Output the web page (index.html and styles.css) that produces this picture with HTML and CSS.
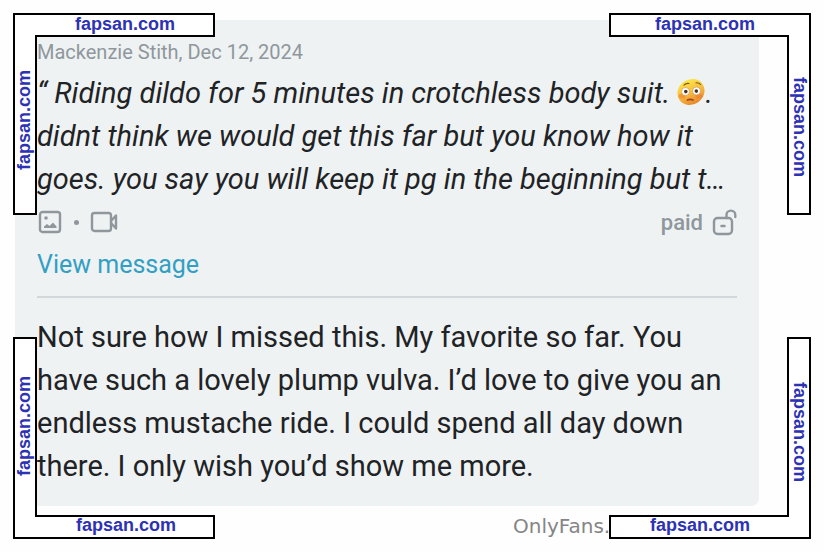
FILE: index.html
```html
<!DOCTYPE html>
<html lang="en">
<head>
    <meta charset="UTF-8">
    <meta name="viewport" content="width=device-width, initial-scale=1.0">
    <title>Message</title>
    <link rel="stylesheet" href="styles.css">
</head>
<body>
    <main class="message">
        <section class="quote">
            <div class="meta">Mackenzie Stith, Dec 12, 2024</div>
            <blockquote class="quote-text">
                “ Riding dildo for 5 minutes in crotchless body suit. <svg class="emoji" viewBox="0 0 28 28" role="img" aria-label="flushed face">
                    <defs>
                        <linearGradient id="face" x1="0.6" y1="0" x2="0.4" y2="1">
                            <stop offset="0" stop-color="#fbe84a"/>
                            <stop offset="0.5" stop-color="#f6bd3e"/>
                            <stop offset="1" stop-color="#e8872c"/>
                        </linearGradient>
                    </defs>
                    <ellipse cx="14" cy="14" rx="14" ry="12.5" transform="rotate(-35 14 14)" fill="url(#face)"/>
                    <ellipse cx="5" cy="18" rx="3.5" ry="2.5" fill="#ee7438" opacity="0.5"/>
                    <ellipse cx="22" cy="18" rx="3.5" ry="2.5" fill="#ee7438" opacity="0.5"/>
                    <circle cx="8.5" cy="13.5" r="4" fill="#fff" stroke="#c58a45" stroke-width="0.6"/>
                    <circle cx="19.5" cy="13" r="4" fill="#fff" stroke="#c58a45" stroke-width="0.6"/>
                    <circle cx="8.8" cy="13.6" r="1.8" fill="#4b3020"/>
                    <circle cx="19.3" cy="13.1" r="1.8" fill="#4b3020"/>
                    <path d="M7 7.2Q9 4.800 12 5.500M19 4.800Q22 4.500 23.500 6.500" fill="none" stroke="#85591d" stroke-width="1.2" stroke-linecap="round"/>
                    <path d="M10.500 22Q13 20.800 16 22" fill="none" stroke="#a4432a" stroke-width="1.8" stroke-linecap="round"/>
                </svg>.<br>
                didnt think we would get this far but you know how it<br>
                goes. you say you will keep it pg in the beginning but t…
            </blockquote>
            <div class="info">
                <div class="media">
                    <svg class="icon" viewBox="0 0 24 24">
                        <rect x="2" y="2" width="20" height="20" rx="2.500" fill="none" stroke="currentColor" stroke-width="2.4"/>
                        <circle cx="8" cy="8" r="1.800" fill="currentColor"/>
                        <path d="M6 18V16.500L9 14L11.500 16L15 12.500L18.500 16.500V18Z" fill="currentColor"/>
                    </svg>
                    <span class="dot"></span>
                    <svg class="icon-video" viewBox="0 0 28 24">
                        <rect x="2" y="3" width="19" height="18" rx="2.500" fill="none" stroke="currentColor" stroke-width="2.4"/>
                        <path d="M21 11L26 5.500V18.500L21 13" fill="none" stroke="currentColor" stroke-width="2.4" stroke-linejoin="round"/>
                    </svg>
                </div>
                <div class="price">
                    paid
                    <svg class="icon-lock" viewBox="0 0 26 28">
                        <rect x="3" y="10" width="18" height="16" rx="3.500" fill="none" stroke="currentColor" stroke-width="2.4"/>
                        <path d="M15.500 10V7A4.400 4.400 0 0 1 24.300 7V9" fill="none" stroke="currentColor" stroke-width="2.4" stroke-linecap="round"/>
                        <path d="M10.500 18H13.500" stroke="currentColor" stroke-width="2.500" stroke-linecap="round"/>
                    </svg>
                </div>
            </div>
            <a class="view-link" href="#">View message</a>
        </section>
        <p class="reply">
            Not sure how I missed this. My favorite so far. You<br>
            have such a lovely plump vulva. I’d love to give you an<br>
            endless mustache ride. I could spend all day down<br>
            there. I only wish you’d show me more.
        </p>
    </main>
    <footer class="source">OnlyFans.</footer>

    <!-- corner frames -->
    <svg class="corner top left" viewBox="0 0 202 202">
        <path d="M1 1H201V23H23V201H1Z"/>
        <text x="112" y="17">fapsan.com</text>
        <text transform="translate(17 107) rotate(-90)">fapsan.com</text>
    </svg>
    <svg class="corner top right" viewBox="0 0 202 202">
        <path d="M201 1H1V23H179V201H201Z"/>
        <text x="96" y="17">fapsan.com</text>
        <text transform="translate(185 114) rotate(90)">fapsan.com</text>
    </svg>
    <svg class="corner bottom left" viewBox="0 0 202 202">
        <path d="M1 201H201V179H23V1H1Z"/>
        <text x="113" y="194">fapsan.com</text>
        <text transform="translate(17 89) rotate(-90)">fapsan.com</text>
    </svg>
    <svg class="corner bottom right" viewBox="0 0 202 202">
        <path d="M201 201H1V179H179V1H201Z"/>
        <text x="91" y="194">fapsan.com</text>
        <text transform="translate(185 95) rotate(90)">fapsan.com</text>
    </svg>
</body>
</html>
```
FILE: styles.css
```css
body {
    font-family: Roboto, sans-serif;
    margin: 0;
    padding: 20px 65px 0 15px;
    background-color: #fefefe;
    color: #1f2326;
}

.message {
    background-color: #eef2f3;
    border-radius: 8px;
    padding: 18px 22px;
}

.quote {
    border-bottom: 2px solid #d2d7d9;
    padding-bottom: 10px;
}

.meta {
    color: #8f979c;
    font-size: 20px;
    line-height: 28px;
}

.quote-text {
    margin: 6px 0 0;
    font-size: 29px;
    font-style: italic;
    line-height: 43px;
    white-space: nowrap;
}

.emoji {
    width: 28px;
    height: 28px;
    vertical-align: -3px;
}

.info {
    display: flex;
    justify-content: space-between;
    align-items: center;
    height: 42px;
    color: #8f979c;
}

.media,
.price {
    display: flex;
    align-items: center;
}

.media {
    gap: 11px;
}

.price {
    gap: 8px;
    font-size: 22px;
    font-weight: 500;
}

.icon {
    width: 26px;
    height: 24px;
}

.icon-video {
    width: 28px;
    height: 24px;
}

.icon-lock {
    width: 26px;
    height: 28px;
}

.dot {
    width: 5px;
    height: 5px;
    border-radius: 50%;
    background-color: #8f979c;
}

.view-link {
    display: block;
    color: #339fc3;
    font-size: 25px;
    line-height: 43px;
    text-decoration: none;
}

.reply {
    margin: 18px 0 0;
    font-size: 29px;
    line-height: 43px;
    white-space: nowrap;
}

.source {
    margin-left: 498px;
    padding-top: 8px;
    color: #858585;
    font-family: "DejaVu Sans", sans-serif;
    font-size: 20px;
    line-height: 24px;
}

.corner {
    position: absolute;
    width: 202px;
    height: 202px;
}

.corner path {
    fill: #fff;
    stroke: #000;
    stroke-width: 2px;
}

.corner text {
    fill: #2d32b4;
    font-family: "Liberation Sans", sans-serif;
    font-size: 18px;
    font-weight: bold;
    text-anchor: middle;
}

.top {
    top: 13px;
}

.bottom {
    bottom: 13px;
}

.left {
    left: 13px;
}

.right {
    right: 13px;
}
```
